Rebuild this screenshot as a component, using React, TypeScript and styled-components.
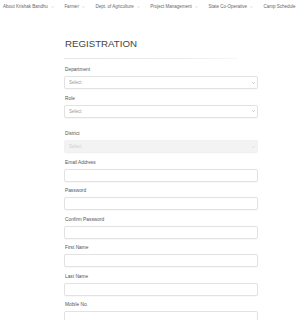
import React from "react";
import styled, { createGlobalStyle } from "styled-components";

const Global = createGlobalStyle`
  html, body { margin: 0; padding: 0; background: #ffffff; }
  body { font-family: "Liberation Sans", Arial, sans-serif; color: #555; }
  * { box-sizing: border-box; }
`;

const Nav = styled.nav`
  display: flex;
  align-items: center;
  gap: 10.6px;
  height: 14px;
  padding-left: 3px;
  white-space: nowrap;
  overflow: hidden;
`;

const NavItem = styled.span`
  display: inline-flex;
  align-items: center;
  font-size: 4.5px;
  color: #666;
  line-height: 6px;
`;

const Chev = styled.svg`
  margin-left: 3px;
  width: 3px;
  height: 2px;
  display: block;
`;

const Chevron = ({ color = "#aaa" }: { color?: string }) => (
  <Chev viewBox="0 0 6 4">
    <polyline points="0.5,0.5 3,3.2 5.5,0.5" fill="none" stroke={color} strokeWidth="0.9" />
  </Chev>
);

const Form = styled.form`
  margin-left: 64px;
  width: 194px;
  display: flex;
  flex-direction: column;
`;

const Title = styled.h1`
  margin: 24px 0 8px 1px;
  font-size: 9.7px;
  line-height: 12px;
  font-weight: 400;
  color: #444;
`;

const Divider = styled.div`
  height: 1px;
  width: 174px;
  margin-bottom: 8px;
  background: linear-gradient(to right, #e4e4e4 0%, #ececec 70%, #f8f8f8 100%);
`;

const Group = styled.div<{ $extra?: number }>`
  display: flex;
  flex-direction: column;
  margin-top: ${(p) => p.$extra ?? 0}px;
  margin-bottom: 6.5px;
`;

const Label = styled.label`
  display: block;
  font-size: 4.8px;
  line-height: 6px;
  color: #555;
  margin: 0 0 3px 1px;
`;

const SelectWrap = styled.div`
  position: relative;
  height: 13px;
`;

const SelectBox = styled.select<{ disabled?: boolean }>`
  appearance: none;
  -webkit-appearance: none;
  display: block;
  margin: 0;
  width: 100%;
  height: 13px;
  padding: 0 0 0 4px;
  border: 1px solid ${(p) => (p.disabled ? "#ececec" : "#e2e2e2")};
  border-radius: 2px;
  background: ${(p) => (p.disabled ? "#eeeeee" : "#ffffff")};
  color: ${(p) => (p.disabled ? "#bbb" : "#999")};
  font-family: "Liberation Sans", Arial, sans-serif;
  font-size: 4.5px;
  outline: none;
  box-shadow: 0 0.5px 1px rgba(0, 0, 0, 0.03);
`;

const SelectIcon = styled.span`
  position: absolute;
  right: 3px;
  top: 5.5px;
  display: flex;
  pointer-events: none;
`;

const Input = styled.input`
  display: block;
  margin: 0;
  width: 100%;
  height: 13px;
  border: 1px solid #e2e2e2;
  border-radius: 2px;
  background: #fff;
  padding: 0 4px;
  font-size: 4.5px;
  outline: none;
  box-shadow: 0 0.5px 1px rgba(0, 0, 0, 0.03);
`;

const navItems = [
  "About Krishak Bandhu",
  "Farmer",
  "Dept. of Agriculture",
  "Project Management",
  "State Co-Operative",
  "Camp Schedule",
];

const SelectField = ({ label, disabled, extra }: { label: string; disabled?: boolean; extra?: number }) => (
  <Group $extra={extra}>
    <Label>{label}</Label>
    <SelectWrap>
      <SelectBox disabled={disabled} defaultValue="">
        <option value="">Select</option>
      </SelectBox>
      <SelectIcon>
        <Chevron color={disabled ? "#c8c8c8" : "#888"} />
      </SelectIcon>
    </SelectWrap>
  </Group>
);

const InputField = ({ label, type = "text" }: { label: string; type?: string }) => (
  <Group>
    <Label>{label}</Label>
    <Input type={type} />
  </Group>
);

export default function App() {
  return (
    <>
      <Global />
      <Nav>
        {navItems.map((n) => (
          <NavItem key={n}>
            {n}
            <Chevron color="#bbb" />
          </NavItem>
        ))}
      </Nav>
      <Form onSubmit={(e) => e.preventDefault()}>
        <Title>REGISTRATION</Title>
        <Divider />
        <SelectField label="Department" />
        <SelectField label="Role" />
        <SelectField label="District" disabled extra={7} />
        <InputField label="Email Address" type="email" />
        <InputField label="Password" type="password" />
        <InputField label="Confirm Password" type="password" />
        <InputField label="First Name" />
        <InputField label="Last Name" />
        <InputField label="Mobile No." />
      </Form>
    </>
  );
}
